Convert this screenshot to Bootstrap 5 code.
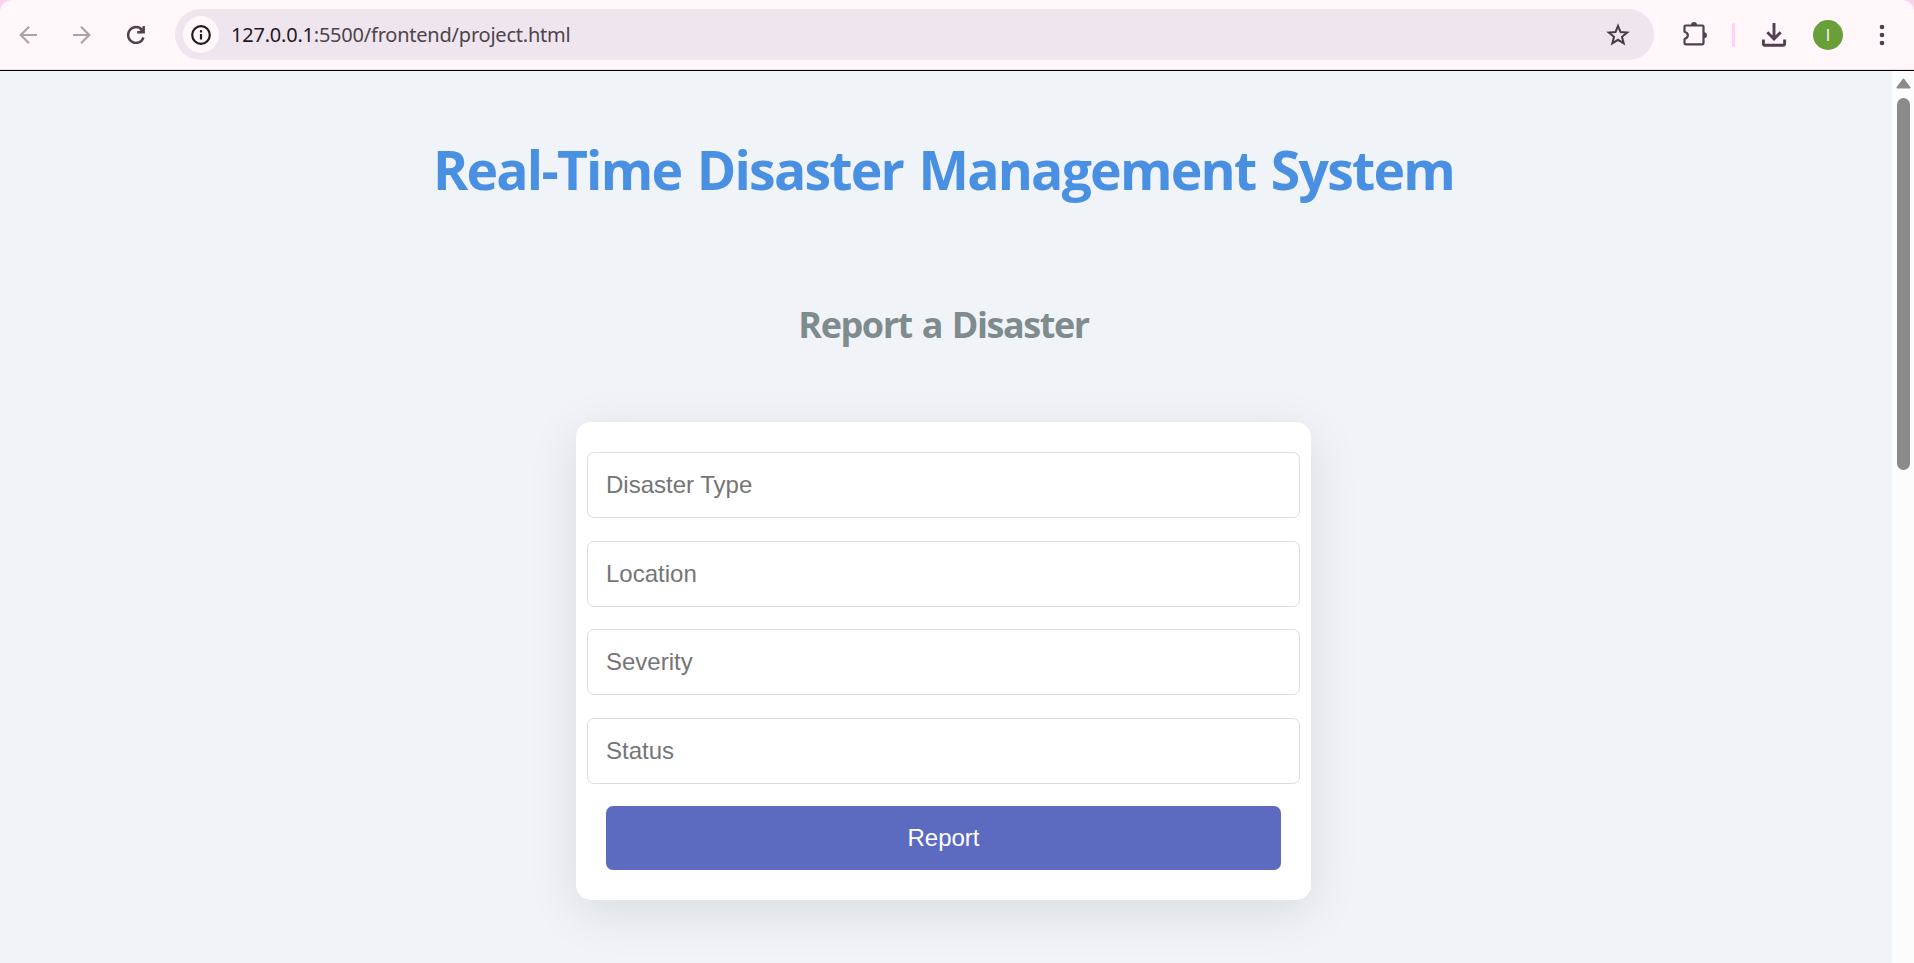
<!DOCTYPE html>
<html lang="en">
<head>
<meta charset="utf-8">
<title>Real-Time Disaster Management System</title>
<link rel="stylesheet" href="https://cdn.jsdelivr.net/npm/bootstrap@5.3.0/dist/css/bootstrap.min.css">
<style>
  body { background: #f9d3ee; font-family: "Open Sans", "Noto Sans", sans-serif; }
  .toolbar { height: 70px; background: #fff7fa; border-radius: 12px 12px 0 0; box-shadow: inset 0 -1px #ece1e9; }
  .toolbar svg { display: block; flex: none; }
  .nav-icons { width: 175px; padding-left: 15px; gap: 26px; }
  .omnibox { height: 51px; width: 1479px; margin-bottom: 1px; background: #efe5ee; padding: 0 22px 0 8px; }
  .site-info { width: 36px; height: 37px; background: #fff7fa; }
  .url { font-family: "Noto Sans", sans-serif; font-size: 20px; letter-spacing: -.22px; margin-left: 12px; color: #4d444c; white-space: nowrap; }
  .url span { color: #1f1a1f; }
  .icon-puzzle { margin-left: 26px; }
  .icon-download { margin-left: 25px; }
  .icon-menu { margin-left: 34px; }
  .sep { width: 3px; height: 24px; background: #ffd3f1; border-radius: 2px; margin-left: 22px; }
  .avatar { width: 30px; height: 30px; background: #689f38; color: #fff; font-size: 16px; margin-left: 25px; }
  .viewport { height: 893px; border-top: 1px solid #000; background: #f0f4f9; }
  .page { padding-right: 5px; }
  .page-title { font-size: 53.5px; line-height: 72px; font-weight: 700; color: #4a90e2; margin: 63px 0 0; letter-spacing: -1.76px; word-spacing: 3.2px; white-space: nowrap; }
  .section-title { font-size: 36px; line-height: 48px; font-weight: 700; color: #7f8c8d; margin: 95px 0 0; letter-spacing: -1.45px; word-spacing: 2px; white-space: nowrap; }
  .report-form { width: 735px; height: 478px; background: #fff; border-radius: 15px; margin-top: 73px; padding: 30px 11px; box-shadow: 0 12px 50px rgba(0,0,0,.1); font-family: "Liberation Sans", Arial, sans-serif; }
  .report-form .form-control { height: 66px; border: 1px solid #ddd; border-radius: 7px; padding: 0 18px; font-size: 24px; margin-bottom: 22.6px; }
  .report-form .form-control::placeholder { color: #757575; opacity: 1; }
  .report-form .btn { width: 675px; height: 64px; background: #5c6bc0; border: 0; border-radius: 7px; color: #fff; font-size: 24px; padding: 0; }
  .scroll-track { width: 22px; background: #fcfcfc; padding-top: 7px; }
  .thumb { width: 13px; height: 372px; background: #8b8b8b; border-radius: 7px; margin-top: 9px; }
</style>
<script src="https://cdn.jsdelivr.net/npm/bootstrap@5.3.0/dist/js/bootstrap.bundle.min.js"></script>
</head>
<body class="overflow-hidden">
<header class="toolbar d-flex align-items-center">
  <div class="nav-icons d-flex align-items-center">
    <svg width="28" height="28" viewBox="0 0 28 28" fill="none" stroke="#aaa4a7" stroke-width="2.2"><path d="M22 14H5.500M14 5.700L5.700 14l8.300 8.300"/></svg>
    <svg width="28" height="28" viewBox="0 0 28 28" fill="none" stroke="#aaa4a7" stroke-width="2.2"><path d="M4 14h16.500M12 5.700L20.300 14l-8.300 8.300"/></svg>
    <svg width="28" height="28" viewBox="0 0 28 28" fill="none" stroke="#523f50" stroke-width="2.400"><path d="M19 8.800A7.900 7.900 0 1 0 20.500 16.500M20.700 5v6.200h-6.500M20 11l-3-3.600"/></svg>
  </div>
  <div class="omnibox rounded-pill d-flex align-items-center">
    <div class="site-info rounded-circle d-flex align-items-center justify-content-center">
      <svg width="20" height="20" viewBox="0 0 20 20"><circle cx="10" cy="10" r="8.800" fill="none" stroke="#1f1a1f" stroke-width="2.200"/><path d="M10 9v5.500M10 5.200v2.200" stroke="#1f1a1f" stroke-width="2.200"/></svg>
    </div>
    <div class="url"><span>127.0.0.1</span>:5500/frontend/project.html</div>
    <svg class="ms-auto" width="28" height="28" viewBox="0 0 28 28"><path d="M14 4.800l2.500 6.200 6.700.5-5.200 4.300 1.700 6.600-5.700-3.600-5.700 3.600L10 15.800l-5.200-4.300 6.700-.5z" fill="none" stroke="#463c45" stroke-width="2"/></svg>
  </div>
  <svg class="icon-puzzle" width="30" height="30" viewBox="0 0 30 30"><path d="M6 5.500h16.500q1 0 1 1V23.300q0 1-1 1h-17q-1 0-1-1V19c4.500-1.300 4.500-6 0-7.300V6.500q0-1 1-1z" fill="none" stroke="#523f50" stroke-width="2.200" stroke-linejoin="round"/><path d="M11 5a3 3 0 0 1 6 0zM24 12.300a2.900 2.900 0 0 1 0 5.800z" fill="#523f50"/></svg>
  <div class="sep"></div>
  <svg class="icon-download" width="28" height="28" viewBox="0 0 28 28" fill="none" stroke="#523f50" stroke-width="2.900"><path d="M14 2v16M7.300 11.300L14 18l6.700-6.700M3.400 18.500v4.200q0 1.500 1.500 1.500h18.200q1.500 0 1.500-1.500v-4.200"/></svg>
  <div class="avatar rounded-circle d-flex align-items-center justify-content-center">I</div>
  <svg class="icon-menu" width="10" height="24" viewBox="0 0 10 24" fill="#523f50"><circle cx="5" cy="4" r="2.300"/><circle cx="5" cy="12" r="2.300"/><circle cx="5" cy="20" r="2.300"/></svg>
</header>
<div class="viewport d-flex">
  <main class="page flex-grow-1 d-flex flex-column align-items-center">
    <h1 class="page-title">Real-Time Disaster Management System</h1>
    <h2 class="section-title">Report a Disaster</h2>
    <form class="report-form">
      <input class="form-control" placeholder="Disaster Type">
      <input class="form-control" placeholder="Location">
      <input class="form-control" placeholder="Severity">
      <input class="form-control" placeholder="Status">
      <button class="btn d-block mx-auto" type="button">Report</button>
    </form>
  </main>
  <aside class="scroll-track d-flex flex-column align-items-center">
    <svg width="15" height="11" viewBox="0 0 15 11"><path d="M7.500 1.500L13.500 9.500H1.500z" fill="#8b8b8b" stroke="#8b8b8b" stroke-width="2" stroke-linejoin="round"/></svg>
    <div class="thumb"></div>
  </aside>
</div>
</body>
</html>
